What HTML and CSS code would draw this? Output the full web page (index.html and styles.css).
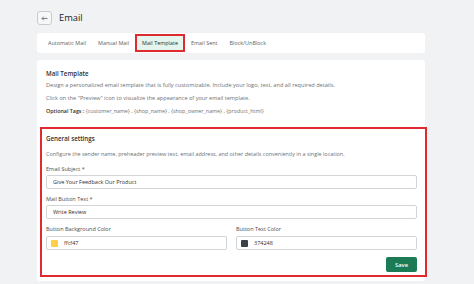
FILE: index.html
```html
<!DOCTYPE html>
<html lang="en">
<head>
<meta charset="utf-8">
<title>Email</title>
<link rel="stylesheet" href="styles.css">
</head>
<body>
<div class="page">
  <div class="header">
    <button class="back" aria-label="Back">
      <svg width="7" height="5" viewBox="0 0 7 5"><path d="M6.5 2.5H1M2.8 0.7L1 2.5l1.8 1.8" fill="none" stroke="#5c5f62" stroke-width="0.8"/></svg>
    </button>
    <h1 class="title">Email</h1>
  </div>
  <nav class="tabs">
    <span class="tab">Automatic Mail</span>
    <span class="tab">Manual Mail</span>
    <span class="tab active">Mail Template</span>
    <span class="tab">Email Sent</span>
    <span class="tab">Block/UnBlock</span>
  </nav>
  <section class="card">
    <div class="intro">
      <h2 class="heading">Mail Template</h2>
      <p class="line">Design a personalized email template that is fully customizable. Include your logo, text, and all required details.</p>
      <p class="line">Click on the "Preview" icon to visualize the appearance of your email template.</p>
      <p class="line tags"><b>Optional Tags :</b> {customer_name} , {shop_name} , {shop_owner_name} , {product_html}</p>
    </div>
    <div class="settings">
      <h3 class="heading">General settings</h3>
      <p class="desc">Configure the sender name, preheader preview text, email address, and other details conveniently in a single location.</p>
      <label class="label">Email Subject *</label>
      <div class="input">Give Your Feedback Our Product</div>
      <label class="label">Mail Button Text *</label>
      <div class="input">Write Review</div>
      <div class="cols">
        <div class="col">
          <label class="label">Button Background Color</label>
          <div class="input color"><span class="swatch yellow"></span>ffcf47</div>
        </div>
        <div class="col">
          <label class="label">Button Text Color</label>
          <div class="input color"><span class="swatch dark"></span>374248</div>
        </div>
      </div>
      <div class="actions"><button class="save">Save</button></div>
    </div>
  </section>
</div>
</body>
</html>
```

FILE: styles.css
```css
* { box-sizing: border-box; }
html, body { margin: 0; padding: 0; }
body {
  background: #f1f2f4;
  font-family: "Open Sans", "Noto Sans", sans-serif;
  color: #303030;
  width: 474px;
  height: 284px;
  overflow: hidden;
}
.page {
  padding: 11px 0 0 37px;
  width: 425px;
}
.header {
  display: flex;
  align-items: center;
  gap: 7px;
  height: 14px;
}
.back {
  width: 15px;
  height: 14px;
  padding: 0;
  border: 1px solid #c9cccf;
  border-radius: 3px;
  background: #f7f7f8;
  display: flex;
  align-items: center;
  justify-content: center;
}
.title {
  margin: 0;
  font-size: 9.3px;
  font-weight: 500;
  color: #202223;
  line-height: 14px;
}
.tabs {
  margin-top: 8px;
  height: 20px;
  background: #fff;
  border-radius: 3px;
  display: flex;
  align-items: center;
  padding-left: 5px;
}
.tab {
  font-size: 5.45px;
  color: #5c5f62;
  padding: 0 6px;
  height: 18px;
  line-height: 18px;
}
.tab.active {
  background: #e3f5ec;
  border: 2px solid #df2a2f;
  line-height: 14px;
  padding: 0 5px;
  color: #303030;
}
.card {
  margin-top: 7px;
  background: #fff;
  border-radius: 3px;
  width: 388px;
  height: 221px;
  padding-top: 9px;
}
.intro { padding: 0 9px; }
.heading {
  margin: 0;
  font-size: 6.2px;
  font-weight: 600;
  line-height: 10px;
  color: #303030;
}
.line {
  margin: 0;
  font-size: 5.6px;
  line-height: 13px;
  color: #6d7175;
  white-space: nowrap;
}
.line.tags { font-size: 5.35px; }
.line b { color: #303030; font-weight: 600; }
.settings {
  margin: 9px -2px 0 3px;
  border: 2px solid #df2a2f;
  padding: 5px 8px 3px 4px;
}
.desc {
  margin: 5px 0 0;
  font-size: 5.45px;
  line-height: 10px;
  color: #6d7175;
  white-space: nowrap;
}
.label {
  display: block;
  margin-top: 5px;
  font-size: 5.5px;
  line-height: 10px;
  color: #4a4d50;
}
.input {
  margin-top: 1px;
  height: 14px;
  border: 1px solid #d2d5d8;
  border-radius: 2px;
  font-size: 5.5px;
  line-height: 12px;
  padding: 0 6px;
  color: #303030;
  display: flex;
  align-items: center;
}
.input.color { margin-top: 2px; padding-left: 4px; gap: 6px; }
.swatch {
  width: 7px;
  height: 7px;
  border-radius: 1px;
  display: inline-block;
}
.swatch.yellow { background: #ffcf47; }
.swatch.dark { background: #374248; }
.cols {
  display: grid;
  grid-template-columns: 1fr 1fr;
  gap: 9px;
}
.actions {
  margin-top: 7px;
  display: flex;
  justify-content: flex-end;
}
.save {
  width: 31px;
  height: 15px;
  border: none;
  border-radius: 2px;
  background: #1a7b55;
  color: #fff;
  font-family: "Open Sans", "Noto Sans", sans-serif;
  font-size: 5.8px;
  font-weight: 600;
  padding: 0;
}
```
